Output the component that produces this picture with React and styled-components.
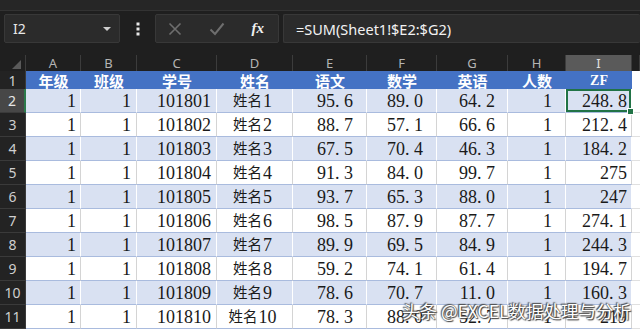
import React from "react";
import styled, { createGlobalStyle } from "styled-components";

const Global = createGlobalStyle`
  html, body { margin: 0; padding: 0; background: #1f1f1f; }
  body { width: 640px; height: 329px; overflow: hidden; }
`;

const COLS = "26px 55px 56px 80px 76px 74px 70px 71px 58px 66px 1fr";

const Page = styled.div`
  width: 640px;
  height: 329px;
  overflow: hidden;
  background: #1f1f1f;
  display: flex;
  flex-direction: column;
  font-family: "Noto Sans", "Noto Sans CJK SC", sans-serif;
`;

const TopStrip = styled.div`
  height: 10px;
  background: #262626;
  border-bottom: 1px solid #333;
  flex: none;
`;

const FormulaBar = styled.div`
  display: flex;
  align-items: stretch;
  height: 29px;
  margin-top: 3px;
  padding-left: 4px;
  flex: none;
`;

const Box = styled.div`
  background: #2b2b2b;
  border: 1px solid #383838;
  border-radius: 2px;
  box-sizing: border-box;
  display: flex;
  align-items: center;
`;

const NameBox = styled(Box)`
  width: 116px;
  padding: 0 8px 0 8px;
  justify-content: space-between;
  color: #e8e8e8;
  font-size: 14px;
`;

const Caret = styled.span`
  width: 0;
  height: 0;
  border-left: 4px solid transparent;
  border-right: 4px solid transparent;
  border-top: 4px solid #cfcfcf;
`;

const Dots = styled.div`
  width: 35px;
  display: flex;
  align-items: center;
  justify-content: center;
`;

const IconBox = styled(Box)`
  width: 124px;
  padding: 0 10px 0 12px;
  justify-content: space-between;
`;

const Fx = styled.span`
  font-family: "Liberation Serif", serif;
  font-style: italic;
  font-weight: bold;
  font-size: 15px;
  color: #f0f0f0;
  margin-right: 4px;
`;

const FormulaInput = styled(Box)`
  flex: 1;
  margin-left: 4px;
  padding-left: 12px;
  color: #f2f2f2;
  font-size: 14.5px;
  border-right: none;
`;

const Sheet = styled.div`
  position: relative;
  margin-top: 12px;
  flex: 1;
  display: flex;
  flex-direction: column;
`;

const Row = styled.div`
  display: grid;
  grid-template-columns: ${COLS};
  height: ${(p) => p.$h}px;
  flex: none;
`;

const ColHead = styled.div`
  background: ${(p) => (p.$sel ? "#5a5a5a" : "#1f1f1f")};
  color: ${(p) => (p.$sel ? "#e0e0e0" : "#b4b4b4")};
  font-size: 13px;
  display: flex;
  align-items: center;
  justify-content: center;
  border-right: 1px solid #3c3c3c;
  box-sizing: border-box;
  line-height: 1;
  padding-top: 1px;
`;

const Corner = styled.div`
  background: #1f1f1f;
  border-right: 1px solid #3c3c3c;
  display: flex;
  align-items: flex-end;
  justify-content: flex-end;
  padding: 0 4px 2px 0;
`;

const RowHead = styled.div`
  background: ${(p) => (p.$sel ? "#474747" : "#232323")};
  color: ${(p) => (p.$sel ? "#e6e6e6" : "#cfcfcf")};
  font-size: 14px;
  display: flex;
  align-items: center;
  justify-content: center;
  border-bottom: 1px solid #3a3a3a;
  border-right: ${(p) => (p.$sel ? "2px solid #2a7a4b" : "1px solid #3a3a3a")};
  box-sizing: border-box;
`;

const HeadCell = styled.div`
  background: #4472c4;
  color: #ffffff;
  font-family: "Noto Sans CJK SC", sans-serif;
  font-weight: bold;
  font-size: 15px;
  display: flex;
  align-items: center;
  justify-content: center;
  border-bottom: 1px solid #3d66b0;
  box-sizing: border-box;
  line-height: 1;
`;

const Latin = styled.span`
  font-family: "Liberation Serif", serif;
  font-weight: bold;
  font-size: 14px;
`;

const Cell = styled.div`
  position: relative;
  background: ${(p) => (p.$band ? "#d9e1f2" : "#ffffff")};
  border-right: 1px solid ${(p) => (p.$band ? "#ffffff" : "#d4d4d4")};
  border-bottom: 1px solid #a9bbde;
  box-sizing: border-box;
  display: flex;
  align-items: center;
  justify-content: ${(p) => (p.$align === "center" ? "center" : "flex-end")};
  padding-right: ${(p) => (p.$pad != null ? p.$pad : 4)}px;
  color: #1a1a1a;
  font-family: "Liberation Serif", "Noto Sans CJK SC", serif;
  font-size: 18px;
  line-height: 1;
  white-space: nowrap;
  box-shadow: ${(p) => (p.$sel ? "inset 0 0 0 2px #217346" : "none")};
`;

const Blank = styled.div`
  background: #ffffff;
  border-bottom: 1px solid #e0e0e0;
  box-sizing: border-box;
`;

const Cjk = styled.span`
  font-family: "Noto Sans CJK SC", sans-serif;
  font-size: 14.5px;
  margin-right: 1px;
`;

const Dot = styled.span`
  margin-right: 0.25em;
`;

const Handle = styled.span`
  position: absolute;
  right: -3px;
  bottom: -3px;
  width: 5px;
  height: 5px;
  background: #217346;
  border: 1px solid #ffffff;
  z-index: 2;
`;

const Watermark = styled.div`
  position: absolute;
  right: 9px;
  bottom: 6px;
  font-family: "Noto Sans CJK SC", sans-serif;
  font-size: 17.5px;
  color: #ffffff;
  text-shadow: 0 0 2px #333, 1px 1px 1px #444, -1px -1px 1px #555;
  z-index: 3;
  white-space: nowrap;
`;

const Num = ({ v }) => {
  const s = String(v);
  if (!s.includes(".")) return <>{s}</>;
  const [a, b] = s.split(".");
  return (
    <>
      {a}
      <Dot>.</Dot>
      {b}
    </>
  );
};

const letters = ["A", "B", "C", "D", "E", "F", "G", "H", "I"];
const heads = ["年级", "班级", "学号", "姓名", "语文", "数学", "英语", "人数"];

const data = [
  ["101801", 1, "95.6", "89.0", "64.2", "248.8"],
  ["101802", 2, "88.7", "57.1", "66.6", "212.4"],
  ["101803", 3, "67.5", "70.4", "46.3", "184.2"],
  ["101804", 4, "91.3", "84.0", "99.7", "275"],
  ["101805", 5, "93.7", "65.3", "88.0", "247"],
  ["101806", 6, "98.5", "87.9", "87.7", "274.1"],
  ["101807", 7, "89.9", "69.5", "84.9", "244.3"],
  ["101808", 8, "59.2", "74.1", "61.4", "194.7"],
  ["101809", 9, "78.6", "70.7", "11.0", "160.3"],
  ["101810", 10, "78.3", "88.0", "52.7", "219"],
];

export default function App() {
  return (
    <Page>
      <Global />
      <TopStrip />
      <FormulaBar>
        <NameBox>
          <span>I2</span>
          <Caret />
        </NameBox>
        <Dots>
          <svg width="4" height="14" viewBox="0 0 4 14">
            <rect x="0.5" y="0.5" width="3" height="3" fill="#e8e8e8" />
            <rect x="0.5" y="5.5" width="3" height="3" fill="#e8e8e8" />
            <rect x="0.5" y="10.5" width="3" height="3" fill="#e8e8e8" />
          </svg>
        </Dots>
        <IconBox>
          <svg width="14" height="14" viewBox="0 0 14 14">
            <path d="M1.5 1.5 L12.5 12.5 M12.5 1.5 L1.5 12.5" stroke="#6e6e6e" strokeWidth="1.6" />
          </svg>
          <svg width="16" height="14" viewBox="0 0 16 14">
            <path d="M1.5 7.5 L6 12 L14.5 1.5" stroke="#6e6e6e" strokeWidth="2" fill="none" />
          </svg>
          <Fx>fx</Fx>
        </IconBox>
        <FormulaInput>=SUM(Sheet1!$E2:$G2)</FormulaInput>
      </FormulaBar>
      <Sheet>
        <Row $h={16}>
          <Corner>
            <svg width="9" height="9" viewBox="0 0 9 9">
              <path d="M9 0 L9 9 L0 9 Z" fill="#5a5a5a" />
            </svg>
          </Corner>
          {letters.map((l) => (
            <ColHead key={l} $sel={l === "I"}>
              {l}
            </ColHead>
          ))}
          <ColHead />
        </Row>
        <Row $h={18}>
          <RowHead>1</RowHead>
          {heads.map((h) => (
            <HeadCell key={h}>{h}</HeadCell>
          ))}
          <HeadCell>
            <Latin>ZF</Latin>
          </HeadCell>
          <Blank />
        </Row>
        {data.map((r, i) => {
          const band = i % 2 === 0;
          const sel = i === 0;
          return (
            <Row $h={24} key={r[0]}>
              <RowHead $sel={sel}>{i + 2}</RowHead>
              <Cell $band={band} $pad={4}>1</Cell>
              <Cell $band={band} $pad={5}>1</Cell>
              <Cell $band={band} $pad={5}>{r[0]}</Cell>
              <Cell $band={band} $align="center">
                <Cjk>姓名</Cjk>
                {r[1]}
              </Cell>
              <Cell $band={band} $pad={13}>
                <Num v={r[2]} />
              </Cell>
              <Cell $band={band} $pad={13}>
                <Num v={r[3]} />
              </Cell>
              <Cell $band={band} $pad={12}>
                <Num v={r[4]} />
              </Cell>
              <Cell $band={band} $pad={13}>1</Cell>
              <Cell $band={band} $pad={4} $sel={sel}>
                <Num v={r[5]} />
                {sel && <Handle />}
              </Cell>
              <Blank />
            </Row>
          );
        })}
        <Watermark>头条 @EXCEL数据处理与分析</Watermark>
      </Sheet>
    </Page>
  );
}
